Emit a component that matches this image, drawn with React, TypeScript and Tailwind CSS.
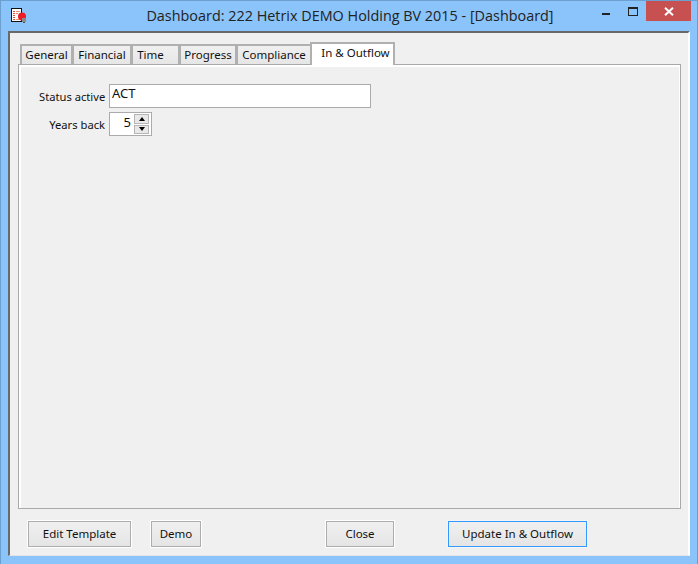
const TABS = [
  { label: "General", width: "w-[53px]", pad: "" },
  { label: "Financial", width: "w-[60px]", pad: "" },
  { label: "Time", width: "w-[49px]", pad: "pr-[10px]" },
  { label: "Progress", width: "w-[58px]", pad: "" },
  { label: "Compliance", width: "w-[76px]", pad: "" },
];

const UI_FONT = "font-['Noto_Sans',sans-serif]";

function AppIcon() {
  return (
    <svg width="18" height="20" viewBox="0 0 18 20" className="shrink-0">
      <rect x="1.5" y="0.5" width="10" height="13" fill="#fff" stroke="#111" />
      <path d="M3 3.5h2M3 5.5h2M3 7.5h2M3 9.5h2M3 11.5h2" stroke="#e8452c" />
      <path d="M6 3.5h4M6 5.5h2M6 11.5h3" stroke="#ee8a70" />
      <circle cx="12" cy="8.5" r="4" fill="#ee1c25" />
      <rect x="12" y="10" width="4" height="4" fill="#8a8a8a" />
      <rect x="13" y="14" width="2" height="1" fill="#555" />
    </svg>
  );
}

function WindowControls() {
  return (
    <div className="flex w-[96px] items-start justify-end pr-[6px]">
      <div className="mt-[12px] mr-[18px] h-[2px] w-[8px] bg-[#222]" />
      <div className="mt-[6px] mr-[8px] h-[9px] w-[10px] border border-t-2 border-[#222]" />
      <div className="flex h-[20px] w-[45px] items-center justify-center bg-[#c75050]">
        <svg width="10" height="9" viewBox="0 0 10 9">
          <path d="M1 0.8 9 8.2M9 0.8 1 8.2" stroke="#fff" strokeWidth="2" />
        </svg>
      </div>
    </div>
  );
}

function Tab({ label, width, pad }: { label: string; width: string; pad: string }) {
  return (
    <div className={`flex h-[20px] ${width} ${pad} -mr-px items-center justify-center border-2 border-b-0 border-[#b0b0b0] bg-gradient-to-b from-[#f0f0f0] to-[#e6e6e6] text-[11.5px] text-[#111]`}>
      {label}
    </div>
  );
}

function Spinner() {
  return (
    <div className="flex h-[24px] w-[43px] items-center border border-[#ababab] bg-white">
      <span className="w-[24px] pr-[3px] pb-[2px] text-right text-[13px] text-[#111]">5</span>
      <div className="flex h-[20px] w-[15px] flex-col gap-px">
        <div className="flex flex-1 items-center justify-center border border-[#b5b5b5] bg-[#e8e8e8]">
          <div className="h-0 w-0 border-x-[3.5px] border-b-[4px] border-x-transparent border-b-black" />
        </div>
        <div className="flex flex-1 items-center justify-center border border-[#b5b5b5] bg-[#e8e8e8]">
          <div className="h-0 w-0 border-x-[3.5px] border-t-[4px] border-x-transparent border-t-black" />
        </div>
      </div>
    </div>
  );
}

function Button({ label, width, focused }: { label: string; width: string; focused?: boolean }) {
  return (
    <div className={`flex h-[26px] ${width} items-center justify-center border bg-gradient-to-b from-[#f0f0f0] to-[#e5e5e5] text-[11.5px] text-[#111] outline outline-1 ${focused ? "border-[#3399ff] outline-[#f5f5f5]" : "border-[#adadad] outline-white"}`}>
      {label}
    </div>
  );
}

export default function App() {
  return (
    <div className={`flex h-[564px] w-[698px] flex-col border-x border-t border-[#6b9fd0] bg-[#8ac4fa] ${UI_FONT}`}>
      {/* title bar */}
      <div className="flex h-[30px] shrink-0 items-start">
        <div className="flex w-[96px] pt-[7px] pl-[9px]">
          <AppIcon />
        </div>
        <div className="flex-1 pt-[5px] pl-[2px] text-center font-['Open_Sans',sans-serif] text-[14.4px] leading-[20px] whitespace-nowrap text-[#222]">
          Dashboard: 222 Hetrix DEMO Holding BV 2015 - [Dashboard]
        </div>
        <WindowControls />
      </div>

      {/* client area */}
      <div className="mx-[7px] mb-[8px] flex min-h-0 flex-1 flex-col border-t-2 border-l-2 border-r-2 border-b border-t-[#696969] border-l-[#696969] border-r-white border-b-[#e3e3e3] bg-[#f0f0f0]">
        <div className="flex flex-1 flex-col px-[8px] pt-[9px]">
          <div className="flex h-[22px] items-end pl-[2px] pr-[5px]">
            {TABS.map((t) => (
              <Tab key={t.label} label={t.label} width={t.width} pad={t.pad} />
            ))}
            <div className="z-10 -mb-px -ml-px flex h-[23px] w-[85px] items-center justify-center border-2 border-b-0 border-[#b0b0b0] bg-white pb-[3px] pl-[6px] text-[11.5px] text-[#111]">
              In &amp; Outflow
            </div>
          </div>

          {/* panel */}
          <div className="h-[445px] w-[663px] border border-[#a9a9a9]">
            <div className="flex h-full flex-col gap-[4px] border-t-2 border-l-2 border-r border-white bg-[#f0f0f0] pt-[17px] pl-[18px]">
              <div className="flex items-center">
                <span className="w-[70px] shrink-0 pr-[4px] pt-[2px] text-right text-[11.2px] whitespace-nowrap text-[#111]">Status active</span>
                <div className="flex h-[24px] w-[262px] items-center border border-[#ababab] bg-white pb-[4px] pl-[2px] text-[13px] text-[#111]">
                  ACT
                </div>
              </div>
              <div className="flex items-center">
                <span className="w-[70px] shrink-0 pr-[4px] pt-[2px] text-right text-[11.2px] whitespace-nowrap text-[#111]">Years back</span>
                <Spinner />
              </div>
            </div>
          </div>

          {/* button row */}
          <div className="flex h-[46px] items-start pt-[12px] pl-[10px]">
            <Button label="Edit Template" width="w-[103px]" />
            <div className="w-[20px]" />
            <Button label="Demo" width="w-[50px]" />
            <div className="w-[125px]" />
            <Button label="Close" width="w-[68px]" />
            <div className="w-[54px]" />
            <Button label="Update In & Outflow" width="w-[139px]" focused />
          </div>
        </div>
      </div>
    </div>
  );
}
